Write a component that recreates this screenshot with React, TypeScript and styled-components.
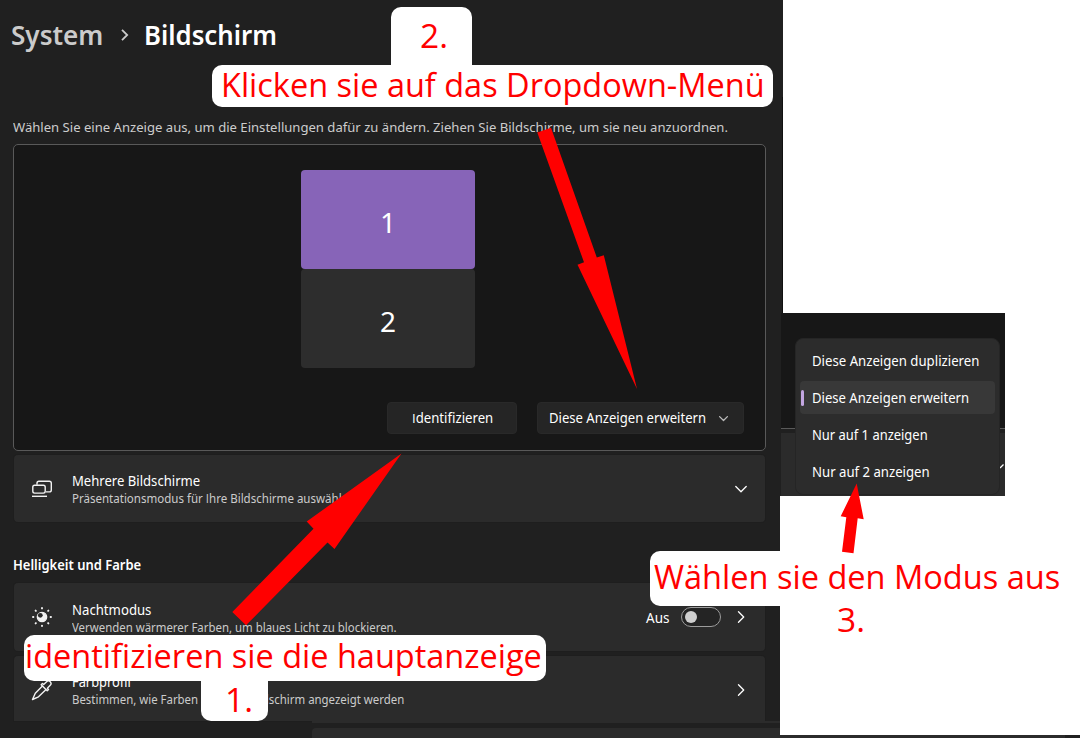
import React, { useLayoutEffect, useRef, useState } from "react";
import styled, { createGlobalStyle } from "styled-components";

const GlobalStyle = createGlobalStyle`
  * { box-sizing: border-box; }
  body {
    margin: 0;
    background: #fff;
    font-family: "Noto Sans", "Open Sans", sans-serif;
    overflow: hidden;
  }
`;

const Page = styled.div`
  position: relative;
  display: flex;
  flex-direction: column;
  width: 1080px;
  height: 738px;
  overflow: hidden;
  background: #fff;
`;

const Columns = styled.div`
  display: flex;
  height: 735px;
`;

const BottomStrip = styled.div`
  display: flex;
  height: 3px;
  background: #202020;
`;

const StripCard = styled.div`
  width: 753px;
  margin-left: 312px;
  background: #2b2b2b;
`;

const SettingsWindow = styled.main`
  display: flex;
  flex-direction: column;
  width: 780px;
  height: 735px;
  padding-left: 13px;
  background: #202020;
  color: #fff;
`;

const SideColumn = styled.div`
  display: flex;
  flex-direction: column;
  width: 300px;
`;

const WindowEdge = styled.div`
  width: 3px;
  height: 313px;
  padding: 97px 0 0 2px;
  background: #202020;

  &::before {
    content: "";
    display: block;
    height: 100%;
    background: #111;
  }
`;

const FitBox = styled.span<{ $width: number }>`
  display: inline-block;
  width: ${(p) => p.$width}px;
  white-space: nowrap;
`;

const FitInner = styled.span`
  display: inline-block;
  transform-origin: 0 50%;
`;

/* Squeezes or widens one line of text to the given width. */
function Fit({ width, children }: { width: number; children: React.ReactNode }) {
  const ref = useRef<HTMLSpanElement>(null);
  const [scale, setScale] = useState(1);
  useLayoutEffect(() => {
    if (ref.current) setScale(width / ref.current.offsetWidth);
  }, [width]);
  return (
    <FitBox $width={width}>
      <FitInner ref={ref} style={{ transform: `scaleX(${scale})` }}>
        {children}
      </FitInner>
    </FitBox>
  );
}

const PlainCap = styled.span`
  font-family: "Open Sans", sans-serif;
`;

const Breadcrumb = styled.header`
  display: flex;
  align-items: center;
  height: 40px;
  margin: 15px 0 0 -2px;
  font-size: 27.5px;
  line-height: 40px;
  font-weight: 600;
`;

const Parent = styled.span`
  color: #cbcbcb;
  height: 40px;
`;

const Current = styled.span`
  height: 40px;
`;

const Separator = styled.svg`
  margin: 0 14px 0 17px;
`;

const Hint = styled.p`
  margin: 62px 0 0;
  height: 20px;
  font-size: 13px;
  line-height: 20px;
  color: #cdcdcd;
`;

const Arrangement = styled.section`
  display: flex;
  flex-direction: column;
  align-items: center;
  width: 753px;
  height: 307px;
  margin-top: 7px;
  padding: 25px 21px 0 17px;
  border: 1px solid #595959;
  border-radius: 5px;
  background: #171717;
`;

const Monitor = styled.div<{ $primary?: boolean }>`
  display: flex;
  align-items: center;
  justify-content: center;
  width: 174px;
  height: 99px;
  padding: 4px 0 0 1px;
  border-radius: 4px;
  background: ${(p) => (p.$primary ? "#8764b8" : "#2d2d2d")};
  font-size: 28px;
  font-weight: 400;
  line-height: 1;
`;

const Actions = styled.div`
  display: flex;
  align-self: flex-end;
  gap: 20px;
  margin-top: 34px;
`;

const Button = styled.button<{ $width: number; $nudge?: number }>`
  display: flex;
  align-items: center;
  justify-content: center;
  gap: 13px;
  width: ${(p) => p.$width}px;
  height: 32px;
  padding: 0 ${(p) => p.$nudge ?? 0}px 0 0;
  border: 1px solid #292929;
  border-radius: 4px;
  background: #252525;
  color: #fff;
  font: 400 13.5px/20px "Noto Sans", sans-serif;
`;

const Card = styled.section<{ $height: number; $top: number; $cut?: boolean }>`
  display: flex;
  align-items: center;
  width: 751px;
  height: ${(p) => p.$height}px;
  margin: ${(p) => p.$top}px 0 0 1px;
  padding: ${(p) => (p.$cut ? 2 : 0)}px 18px 0 17px;
  border-radius: ${(p) => (p.$cut ? "4px 4px 0 0" : "4px")};
  background: #2b2b2b;
  box-shadow: 0 0 0 1px #1e1e1e;
`;

const CardIcon = styled.svg`
  flex: none;
  width: 22px;
  height: 22px;
  margin-right: 19px;
`;

const CardText = styled.div<{ $top?: number }>`
  display: flex;
  flex-direction: column;
  flex: 1;
  padding-top: ${(p) => p.$top ?? 2}px;
`;

const CardTitle = styled.div`
  height: 18px;
  font-size: 13.5px;
  line-height: 18px;
`;

const CardSub = styled.div`
  height: 17px;
  font-size: 11.7px;
  line-height: 17px;
  color: #cbcbcb;
`;

const ToggleLabel = styled.span`
  margin-right: 12px;
  height: 20px;
  padding-top: 1px;
  font-size: 13.5px;
  line-height: 20px;
`;

const Toggle = styled.span`
  display: flex;
  align-items: center;
  width: 40px;
  height: 20px;
  margin-right: 14px;
  padding-left: 3px;
  border: 1px solid #9c9c9c;
  border-radius: 10px;
  background: #242424;
`;

const Knob = styled.span`
  width: 12px;
  height: 12px;
  border-radius: 50%;
  background: #cfcfcf;
`;

const SectionHeading = styled.h2`
  margin: 33px 0 0;
  height: 20px;
  font-size: 13.5px;
  line-height: 20px;
  font-weight: 600;
`;

const Seam = styled.div`
  width: 468px;
  height: 2px;
  margin-left: 299px;
  background: #2b2b2b;
`;

const NextCard = styled.div`
  width: 468px;
  height: 7px;
  margin: 5px 0 0 299px;
  border-top-left-radius: 4px;
  background: #2b2b2b;
`;

const MenuShot = styled.aside`
  display: flex;
  flex-direction: column;
  width: 225px;
  height: 183px;
  border-left: 1px solid #202020;
  background: #171717;
  position: relative;
`;

const ShotGap = styled.div`
  height: 5px;
  margin-top: 115px;
  border-top: 1px solid #595959;
  background: #202020;
`;

const ShotCard = styled.div`
  display: flex;
  flex: 1;
  justify-content: flex-end;
  background: #2b2b2b;
`;

const Menu = styled.ul`
  position: absolute;
  left: 14px;
  top: 25px;
  width: 205px;
  height: 157px;
  margin: 0;
  padding: 5px 4px 0;
  list-style: none;
  border: 1px solid #252525;
  border-radius: 8px;
  background: #2c2c2c;
  color: #fff;
  font-size: 13.5px;
`;

const MenuItem = styled.li<{ $selected?: boolean }>`
  display: flex;
  align-items: center;
  height: 33px;
  margin-bottom: 4px;
  border-radius: 4px;
  background: ${(p) => (p.$selected ? "#383838" : "transparent")};
  line-height: 20px;

  &::before {
    content: "";
    width: 3px;
    height: 16px;
    margin: 0 8px 0 1px;
    border-radius: 2px;
    background: ${(p) => (p.$selected ? "#c3a6e1" : "transparent")};
  }
`;

const Arrows = styled.svg`
  position: absolute;
  inset: 0;
`;

const Note = styled.div<{ $x: number; $y: number; $w: number; $h: number; $pad: number; $radius: string; $shift?: number }>`
  position: absolute;
  left: ${(p) => p.$x}px;
  top: ${(p) => p.$y}px;
  width: ${(p) => p.$w}px;
  height: ${(p) => p.$h}px;
  padding: ${(p) => p.$shift ?? 0}px 0 0 ${(p) => p.$pad}px;
  border-radius: ${(p) => p.$radius};
  background: #fff;
  color: #f00;
  font: 400 33.5px/39px "Open Sans", sans-serif;
`;

const Chevron = ({ down, size = 12, color = "#fff" }: { down?: boolean; size?: number; color?: string }) => (
  <svg width={size} height={size} viewBox="0 0 12 12" fill="none" stroke={color} strokeWidth={1.3 * (12 / size)} strokeLinecap="round" strokeLinejoin="round">
    <path d={down ? "M.8 3.5 6 8.7l5.2-5.2" : "M3.5.8 8.7 6l-5.2 5.2"} />
  </svg>
);

export default function App() {
  return (
    <Page>
      <GlobalStyle />
      <Columns>
        <SettingsWindow>
          <Breadcrumb>
            <Parent><Fit width={92}>System</Fit></Parent>
            <Separator width="10" height="12" viewBox="0 0 10 12" fill="none" stroke="#cbcbcb" strokeWidth="1.8">
              <path d="M2 .8 7.2 6 2 11.2" />
            </Separator>
            <Current><Fit width={133}>Bildschirm</Fit></Current>
          </Breadcrumb>
          <Hint>
            <Fit width={715}>
              Wählen Sie eine Anzeige aus, um die Einstellungen dafür zu ändern. Ziehen Sie Bildschirme, um sie neu anzuordnen.
            </Fit>
          </Hint>
          <Arrangement>
            <Monitor $primary>1</Monitor>
            <Monitor>2</Monitor>
            <Actions>
              <Button $width={130}>
                <Fit width={81}><PlainCap>I</PlainCap>dentifizieren</Fit>
              </Button>
              <Button $width={207} $nudge={4}>
                <Fit width={157}>Diese Anzeigen erweitern</Fit>
                <Chevron down size={9} color="#bbb" />
              </Button>
            </Actions>
          </Arrangement>
          <Card $height={67} $top={4}>
            <CardIcon viewBox="0 0 22 22" fill="none" stroke="#f2f2f2" strokeWidth="1.4">
              <path d="M6 6.8V5.3a2 2 0 0 1 2-2h10.3a2 2 0 0 1 2 2v6.6a2 2 0 0 1-2 2H15" />
              <rect x="1.8" y="7.3" width="12.4" height="7.8" rx="1.8" />
              <path d="M1 18.300h15" />
            </CardIcon>
            <CardText $top={1}>
              <CardTitle><Fit width={128}>Mehrere Bildschirme</Fit></CardTitle>
              <CardSub>
                <Fit width={283}>Präsentationsmodus für <PlainCap>I</PlainCap>hre Bildschirme auswählen</Fit>
              </CardSub>
            </CardText>
            <Chevron down />
          </Card>
          <SectionHeading><Fit width={128}>Helligkeit und Farbe</Fit></SectionHeading>
          <Card $height={68} $top={8}>
            <CardIcon viewBox="0 0 22 22" fill="none" stroke="#f2f2f2" strokeWidth="1.3">
              <circle cx="11" cy="11" r="4.7" fill="#f2f2f2" />
              <circle cx="9.3" cy="9.3" r="2.4" fill="#2b2b2b" stroke="none" />
              <g strokeWidth="1.9" strokeLinecap="round">
                <path d="M11 2v.4M11 19.6v.4M2 11h.4M19.6 11h.4M4.6 4.6l.3.3M17.1 17.1l.3.3M4.6 17.4l.3-.3M17.1 4.9l.3-.3" />
              </g>
            </CardIcon>
            <CardText $top={3}>
              <CardTitle><Fit width={79}>Nachtmodus</Fit></CardTitle>
              <CardSub><Fit width={325}>Verwenden wärmerer Farben, um blaues Licht zu blockieren.</Fit></CardSub>
            </CardText>
            <ToggleLabel><Fit width={23}>Aus</Fit></ToggleLabel>
            <Toggle><Knob /></Toggle>
            <Chevron />
          </Card>
          <Card $height={65} $top={5} $cut>
            <CardIcon viewBox="0 0 22 22" fill="none" stroke="#f2f2f2" strokeWidth="1.4" strokeLinejoin="round" strokeLinecap="round">
              <path d="M11.2 7.200 4.3 14.2 1.500 20.500l6-2.700 7.300-7.100" />
              <path d="m10.2 5.8 6 6 1.3-1.4-1.1-1.2 2.8-2.9a2.500 2.500 0 0 0-3.600-3.600l-2.900 2.8-1.200-1.100z" />
            </CardIcon>
            <CardText $top={1}>
              <CardTitle><Fit width={59}>Farbprofil</Fit></CardTitle>
              <CardSub><Fit width={332}>Bestimmen, wie Farben auf dem Bildschirm angezeigt werden</Fit></CardSub>
            </CardText>
            <Chevron />
          </Card>
          <Seam />
          <NextCard />
        </SettingsWindow>
        <SideColumn>
          <WindowEdge />
          <MenuShot>
            <ShotGap />
            <ShotCard>
              <svg width="6" height="60" viewBox="0 0 6 60" fill="none" stroke="#fff" strokeWidth="1.3">
                <path d="m1 35 3.5-3.5" />
              </svg>
            </ShotCard>
            <Menu>
              <MenuItem><Fit width={167}>Diese Anzeigen duplizieren</Fit></MenuItem>
              <MenuItem $selected><Fit width={157}>Diese Anzeigen erweitern</Fit></MenuItem>
              <MenuItem><Fit width={116}>Nur auf 1 anzeigen</Fit></MenuItem>
              <MenuItem><Fit width={118}>Nur auf 2 anzeigen</Fit></MenuItem>
            </Menu>
          </MenuShot>
        </SideColumn>
      </Columns>
      <BottomStrip><StripCard /></BottomStrip>

      <Note $x={391} $y={7} $w={81} $h={60} $pad={29} $radius="10px 10px 0 0" $shift={9}>
        <Fit width={28}>2.</Fit>
      </Note>
      <Note $x={212} $y={65} $w={561} $h={42} $pad={9} $radius="10px">
        <Fit width={544}>Klicken sie auf das Dropdown-Menü</Fit>
      </Note>
      <Note $x={201} $y={670} $w={67} $h={51} $pad={24} $radius="0 0 10px 10px" $shift={10}>
        <Fit width={28}>1.</Fit>
      </Note>
      <Note $x={24} $y={635} $w={522} $h={46} $pad={1} $radius="10px" $shift={1}>
        <Fit width={517}>identifizieren sie die hauptanzeige</Fit>
      </Note>
      <Note $x={650} $y={551} $w={430} $h={55} $pad={4} $radius="10px" $shift={6}>
        <Fit width={406}>Wählen sie den Modus aus</Fit>
      </Note>
      <Note $x={830} $y={600} $w={50} $h={40} $pad={7} $radius="0">
        <Fit width={28}>3.</Fit>
      </Note>
      <Arrows width="1080" height="738" viewBox="0 0 1080 738" fill="#f00">
        <path d="M537.3 132.6 551 127.8 596.8 257.5 603.8 255.3 637 389 577.5 264.7 584 262.3z" />
        <path d="M232.3 612 313.5 528.7 306.7 521.5 401.5 453.5 334.5 549 327.5 542.5 246 625.3z" />
        <path d="M856.7 483.5 863.7 519.3 857.7 518.3 853.5 553.3 842 551.8 846.3 517.2 840.7 516.3z" />
      </Arrows>
    </Page>
  );
}
